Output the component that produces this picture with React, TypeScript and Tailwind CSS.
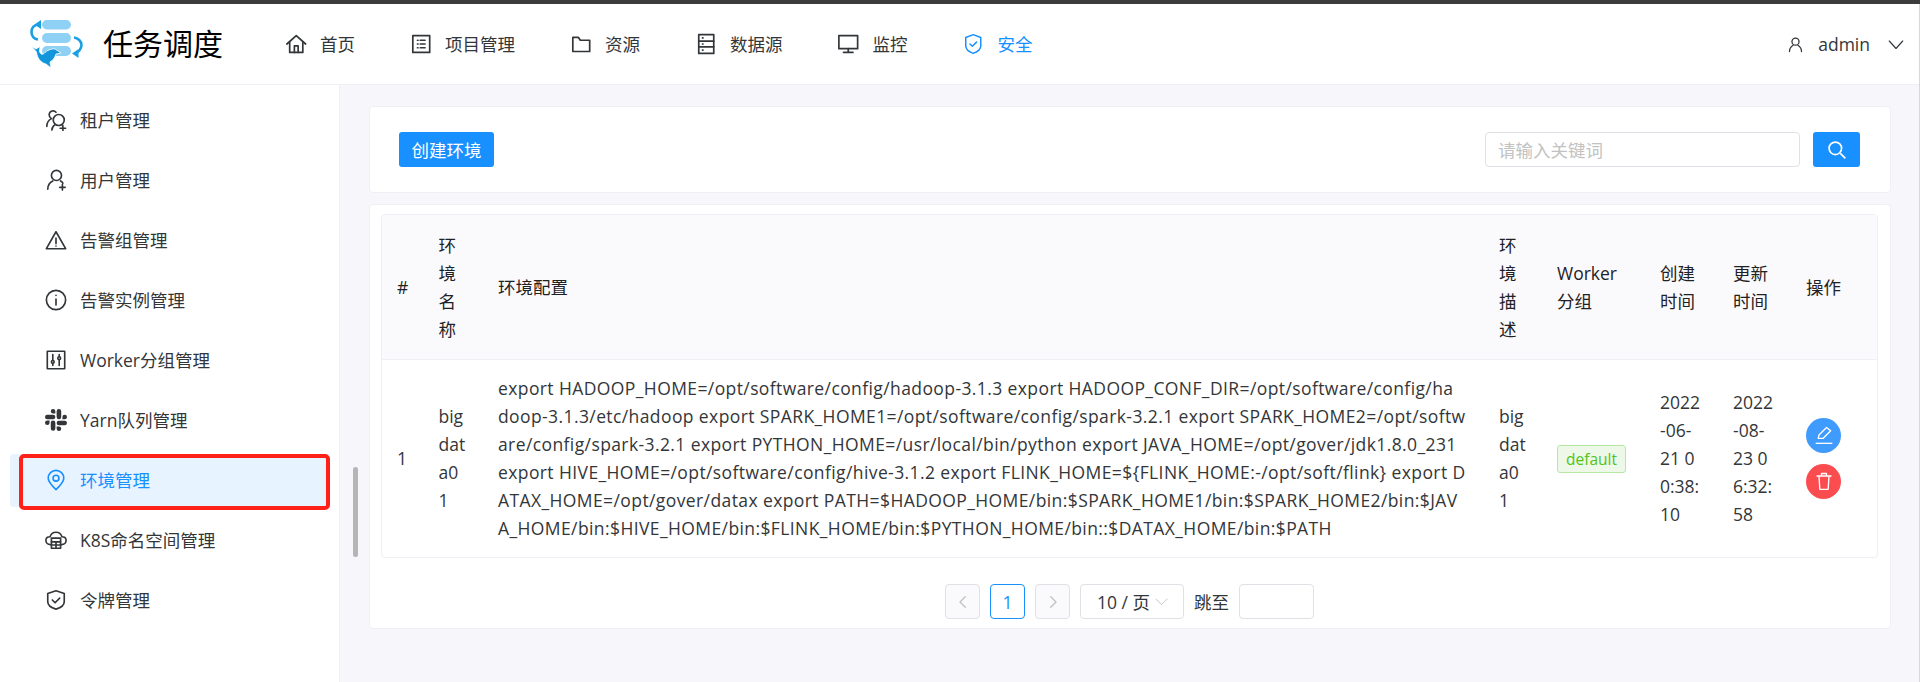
import React from "react";

const cjk = '"Noto Sans CJK SC"';
const font = { fontFamily: `"Open Sans", ${cjk}, sans-serif` };

function Ic({ children, c = "", w = 22, s = 1.8 }: { children: React.ReactNode; c?: string; w?: number; s?: number }) {
  return (
    <svg width={w} height={w} viewBox="0 0 24 24" fill="none" stroke="currentColor" strokeWidth={s} strokeLinecap="round" strokeLinejoin="round" className={c}>
      {children}
    </svg>
  );
}

function Logo() {
  return (
    <svg width="58" height="52" viewBox="0 0 58 52" className="shrink-0">
      <rect x="14" y="2" width="29" height="9.500" rx="4.750" fill="#8fd1f5" />
      <rect x="14" y="15" width="29" height="10" rx="5" fill="#8fd1f5" />
      <rect x="14" y="28" width="29" height="10" rx="5" fill="#8fd1f5" />
      <path d="M10 6.500 C6 7 3.500 10 3.500 14 C3.500 18 6 21 10 21.500" fill="none" stroke="#1b9fe3" strokeWidth="2.600" />
      <path d="M6.500 6.500 L13 2 L13 11 Z" fill="#1b9fe3" />
      <path d="M46 19.500 C50 20 53.500 23 53.500 27 C53.500 31 50 35 47 35.500" fill="none" stroke="#1b9fe3" strokeWidth="2.600" />
      <path d="M44 35.500 L50.500 31 L50.500 40 Z" fill="#1b9fe3" />
      <path d="M3 28 L8 31 L12 28.500 L11.500 33 C12 36 14 37 16 35.500 C19 32 24 30.500 27 31 L33 35 L28 36 C27 40 24 43 22 44 L23 50 L18 46 C13 45 9 40 8.500 34 Z" fill="#1296db" stroke="#fff" strokeWidth="0.800" />
    </svg>
  );
}

const navs: [string, React.ReactNode, boolean?][] = [
  ["首页", <Ic w={24}><path d="M2 12 12 3l10 9" /><path d="M5 10v11h14V10" /><path d="M10 21v-7h4v7" /></Ic>],
  ["项目管理", <Ic w={24}><rect x="3" y="3" width="18" height="18" /><path d="M8 8h.5M8 12h.5M8 16h.5M11 8h5M11 12h5M11 16h5" /></Ic>],
  ["资源", <Ic w={24}><path d="M3 5h6l2 3h10v12H3z" /></Ic>],
  ["数据源", <Ic w={24}><rect x="4" y="2" width="16" height="20" /><path d="M4 9h16M4 15h16M8 5.500h.5M8 12h.5M8 18.500h.5" /></Ic>],
  ["监控", <Ic w={24}><rect x="2" y="3" width="20" height="14" /><path d="M12 17v4M7 21h10" /></Ic>],
  ["安全", <Ic w={26} s={1.6}><path d="M12 2 4 5v9c0 3 3 6 8 8 5-2 8-5 8-8V5z" /><path d="m8.500 12 2.500 2.500 4.500-4.500" /></Ic>, true],
];

const menus: [string, React.ReactNode, boolean?][] = [
  ["租户管理", <Ic><circle cx="15" cy="12" r="6" /><path d="M12 3.500C10 1 5 1.500 4.500 6c0 2 1 3.500 2.500 4.500C4 12 2 15 2 19M7.500 23c0-3 2-5 3.500-6M19.500 18v6M16.500 21h6" /></Ic>],
  ["用户管理", <Ic><circle cx="12.500" cy="7" r="5.500" /><path d="M3 22c0-4 2.500-7.500 5.500-9M17 13c1 .5 2 1.500 2.500 2.500M19 17v6M16 20h6" /></Ic>],
  ["告警组管理", <Ic><path d="M12 3 1.500 21.500h21z" /><path d="M12 10v6M12 18.500v.1" /></Ic>],
  ["告警实例管理", <Ic><circle cx="12" cy="12" r="10.500" /><path d="M12 11v6.500M12 7v.1" /></Ic>],
  ["Worker分组管理", <Ic><rect x="2.500" y="2.500" width="19" height="19" /><path d="M8.500 6v6M8.500 16v2M15.500 6v2M15.500 12v6" /><circle cx="8.500" cy="14" r="1.500" /><circle cx="15.500" cy="10" r="1.500" /></Ic>],
  ["Yarn队列管理", (
    <svg width="22" height="22" viewBox="0 0 24 24" fill="currentColor">
      <path d="M5 15a2.500 2.500 0 1 1-2.500-2.500H5zm1.300 0a2.500 2.500 0 0 1 5 0v6.300a2.500 2.500 0 0 1-5 0zM8.800 5a2.500 2.500 0 1 1 2.500-2.500V5zm0 1.300a2.500 2.500 0 0 1 0 5H2.500a2.500 2.500 0 0 1 0-5zM19 8.800a2.500 2.500 0 1 1 2.500 2.500H19zm-1.300 0a2.500 2.500 0 0 1-5 0V2.500a2.500 2.500 0 0 1 5 0zM15.200 19a2.500 2.500 0 1 1-2.500 2.500V19zm0-1.300a2.500 2.500 0 0 1 0-5h6.300a2.500 2.500 0 0 1 0 5z" />
    </svg>
  )],
  ["环境管理", <Ic w={24}><path d="M12 22.500c-5-5-8.500-8.500-8.500-12.500a8.500 8.500 0 0 1 17 0c0 4-3.500 7.500-8.500 12.500z" /><circle cx="12" cy="10" r="3.200" /></Ic>, true],
  ["K8S命名空间管理", <Ic><path d="M6 17c-3 0-5-2-5-4.500S3 8.500 5.500 8.500C6.500 5 9 3.500 12 3.500s5.500 1.500 6.500 5c2.500 0 4.500 1.500 4.500 4s-2 4.500-5 4.500" /><rect x="7" y="10" width="10" height="11" /><path d="M7 14h10M7 17.500h10M12 14v7" /></Ic>],
  ["令牌管理", <Ic><path d="M12 2 3 5v9c0 3.500 3.500 6.500 9 8 5.500-1.500 9-4.500 9-8V5z" /><path d="m8 12 3 3 5-5" /></Ic>],
];

const configLines = [
  "export HADOOP_HOME=/opt/software/config/hadoop-3.1.3 export HADOOP_CONF_DIR=/opt/software/config/ha",
  "doop-3.1.3/etc/hadoop export SPARK_HOME1=/opt/software/config/spark-3.2.1 export SPARK_HOME2=/opt/softw",
  "are/config/spark-3.2.1 export PYTHON_HOME=/usr/local/bin/python export JAVA_HOME=/opt/gover/jdk1.8.0_231",
  "export HIVE_HOME=/opt/software/config/hive-3.1.2 export FLINK_HOME=${FLINK_HOME:-/opt/soft/flink} export D",
  "ATAX_HOME=/opt/gover/datax export PATH=$HADOOP_HOME/bin:$SPARK_HOME1/bin:$SPARK_HOME2/bin:$JAV",
  "A_HOME/bin:$HIVE_HOME/bin:$FLINK_HOME/bin:$PYTHON_HOME/bin::$DATAX_HOME/bin:$PATH",
];

const th = "px-[15px] text-left font-normal align-middle text-[#1f2225] border-b border-[#efeff5]";
const td = "px-[15px] align-middle";

function Lines({ items }: { items: string[] }) {
  return (
    <>
      {items.map((t) => (
        <div key={t} className="whitespace-nowrap">{t}</div>
      ))}
    </>
  );
}

export default function App() {
  return (
    <div className="relative h-[682px] w-[1920px] overflow-hidden bg-[#f6f6fb] text-[17.5px] leading-[28px] text-[#333639]" style={font}>
      <div className="h-[4px] bg-[#3c3c3c]" />
      <header className="flex h-[81px] items-center border-b border-[#efeff5] bg-white text-[#333639]">
        <div className="ml-[28px] flex w-[256.500px] items-center">
          <Logo />
          <span className="ml-[17px] text-[30px] leading-[40px] text-black">任务调度</span>
        </div>
        <nav className="flex items-center gap-[54.500px]">
          {navs.map(([t, ic, on]) => (
            <div key={t} className={`flex items-center gap-[13px] ${on ? "text-[#1890ff]" : ""}`}>
              <span className="flex w-[22.500px] justify-center">{ic}</span>
              <span>{t}</span>
            </div>
          ))}
        </nav>
        <div className="ml-auto mr-[15px] flex items-center">
          <Ic w={17}><circle cx="12" cy="8" r="5" /><path d="M3.500 22c0-5 3.500-8 5-9M20.500 22c0-5-3.500-8-5-9" /></Ic>
          <span className="ml-[14px]">admin</span>
          <Ic w={18} s={1.5} c="ml-[17px]"><path d="m3 8 9 10 9-10" /></Ic>
        </div>
      </header>
      <div className="flex h-[597px]">
        <aside className="h-full w-[340px] shrink-0 border-r border-[#efeff5] bg-white px-[10px] pt-[9px]">
          {menus.map(([t, ic, on]) => (
            <div key={t} className={`mb-[7.500px] flex h-[52.500px] items-center rounded-[4px] pl-[35px] ${on ? "bg-[#e7f3ff] text-[#1890ff]" : ""}`}>
              <span className="flex w-[22px] justify-center">{ic}</span>
              <span className="ml-[13px]">{t}</span>
            </div>
          ))}
        </aside>
        <main className="flex-1 pl-[29px] pr-[29px] pt-[21px]">
          <section className="flex h-[87px] items-center justify-between rounded-[4px] border border-[#efeff5] bg-white pl-[29px] pr-[30px]">
            <button className="h-[35px] rounded-[3px] bg-[#1890ff] px-[12.500px] text-white">创建环境</button>
            <div className="flex items-center gap-[13px]">
              <div className="flex h-[35px] w-[315px] items-center rounded-[4px] border border-[#e0e0e6] px-[12px] text-[#c2c2c2]">请输入关键词</div>
              <button className="flex h-[35px] w-[47px] items-center justify-center rounded-[3px] bg-[#1890ff] text-white">
                <svg width="20" height="20" viewBox="0 0 24 24" fill="none" stroke="currentColor" strokeWidth="2"><circle cx="10" cy="10" r="7.500" /><path d="m16 16 6 6" /></svg>
              </button>
            </div>
          </section>
          <section className="mt-[11px] rounded-[4px] border border-[#efeff5] bg-white pb-[9px] pl-[11px] pr-[12px] pt-[9px]">
            <div className="overflow-hidden rounded-[4px] border border-[#efeff5]">
              <table className="w-full table-fixed border-collapse">
                <colgroup>
                  <col className="w-[41.500px]" /><col className="w-[59.500px]" /><col />
                  <col className="w-[58px]" /><col className="w-[103px]" /><col className="w-[73px]" /><col className="w-[73px]" /><col className="w-[86px]" />
                </colgroup>
                <thead>
                  <tr className="h-[144px] bg-[#fafafc]">
                    <th className={th}>#</th>
                    <th className={th}>环境名称</th>
                    <th className={th}>环境配置</th>
                    <th className={th}>环境描述</th>
                    <th className={th}>Worker分组</th>
                    <th className={th}>创建时间</th>
                    <th className={th}>更新时间</th>
                    <th className={th}>操作</th>
                  </tr>
                </thead>
                <tbody>
                  <tr className="h-[198px]">
                    <td className={td}>1</td>
                    <td className={td}><Lines items={["big", "dat", "a0", "1"]} /></td>
                    <td className={`${td} pr-0 tracking-[0.400px]`}><Lines items={configLines} /></td>
                    <td className={td}><Lines items={["big ", "dat ", "a0 ", "1 "]} /></td>
                    <td className={td}>
                      <span className="inline-flex h-[27.500px] items-center rounded-[3px] border border-[#b7e8a3] bg-[#edf8e8] px-[8px] text-[15.500px] text-[#52c41a]">default</span>
                    </td>
                    <td className={td}><Lines items={["2022", "-06-", "21 0", "0:38:", "10"]} /></td>
                    <td className={td}><Lines items={["2022", "-08-", "23 0", "6:32:", "58"]} /></td>
                    <td className={td}>
                      <div className="flex flex-col gap-[11px]">
                        <button className="flex h-[35px] w-[35px] items-center justify-center rounded-full bg-[#409bff] text-white">
                          <svg width="20" height="20" viewBox="0 0 24 24" fill="none" stroke="currentColor" strokeWidth="1.600" strokeLinejoin="round"><path d="m5 16 1-4L15 3l5 4-9 9z" /><path d="M2 22h20" /></svg>
                        </button>
                        <button className="flex h-[35px] w-[35px] items-center justify-center rounded-full bg-[#fb4c50] text-white">
                          <svg width="20" height="20" viewBox="0 0 24 24" fill="none" stroke="currentColor" strokeWidth="1.600" strokeLinejoin="round"><path d="M3 6h18M9 6V3h6v3M6 6l1 16h10l1-16" /></svg>
                        </button>
                      </div>
                    </td>
                  </tr>
                </tbody>
              </table>
            </div>
            <div className="mt-[26px] flex h-[35px] items-center justify-center">
              <span className="flex h-[35px] w-[35px] items-center justify-center rounded-[4px] border border-[#e0e0e6] bg-[#fafafc] text-[#c2c2c2]"><Ic w={18}><path d="m15 5-7 7 7 7" /></Ic></span>
              <span className="ml-[10px] flex h-[35px] w-[35px] items-center justify-center rounded-[4px] border border-[#1890ff] text-[#1890ff]">1</span>
              <span className="ml-[10px] flex h-[35px] w-[35px] items-center justify-center rounded-[4px] border border-[#e0e0e6] bg-[#fafafc] text-[#c2c2c2]"><Ic w={18}><path d="m9 5 7 7-7 7" /></Ic></span>
              <span className="ml-[10px] flex h-[35px] w-[104px] items-center justify-end rounded-[4px] border border-[#e0e0e6] pr-[14px]">10 / 页<Ic w={15} s={1.5} c="ml-[4px] text-[#c2c2c2]"><path d="m3 8 9 9 9-9" /></Ic></span>
              <span className="ml-[10px]">跳至</span>
              <span className="ml-[10px] h-[35px] w-[75px] rounded-[4px] border border-[#e0e0e6]" />
            </div>
          </section>
        </main>
      </div>
      <div className="absolute left-[353px] top-[467px] h-[90px] w-[5px] rounded-[3px] bg-[#b5b5b5]" />
      <div className="absolute left-[19px] top-[454px] h-[56px] w-[311px] rounded-[5px] border-[4px] border-[#ff2018]" />
      <div className="absolute right-0 top-[4px] h-[678px] w-px bg-[#d8d8d8]" />
    </div>
  );
}
